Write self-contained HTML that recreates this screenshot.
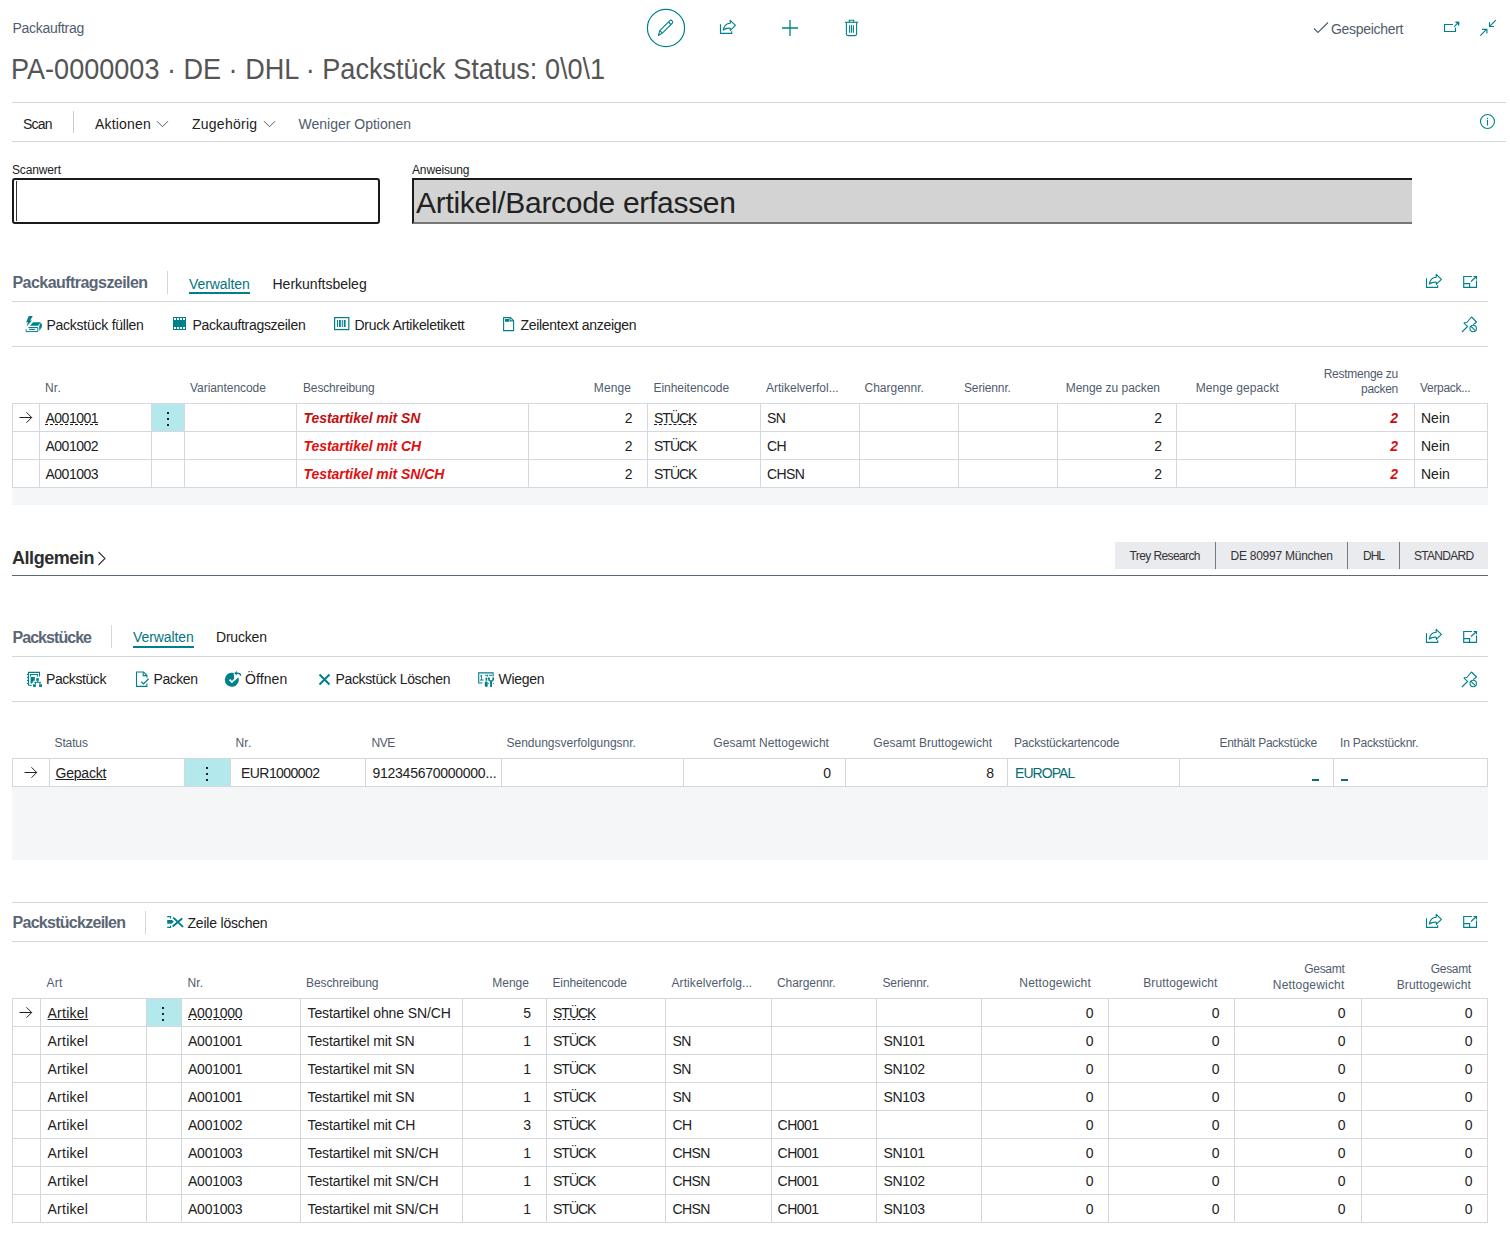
<!DOCTYPE html>
<html><head><meta charset="utf-8"><title>Packauftrag</title>
<style>
html,body{margin:0;padding:0;background:#fff;}
body{width:1510px;height:1248px;position:relative;overflow:hidden;font-family:"Liberation Sans", sans-serif;}
.t{position:absolute;white-space:nowrap;}
.r{position:absolute;display:block;}
</style></head><body>
<div class="t" style="top:19.45px;font-size:14px;line-height:18px;color:#505c6d;letter-spacing:-0.3px;left:12.5px;">Packauftrag</div>
<div class="t" style="top:50.20px;font-size:30px;line-height:38px;color:#555555;letter-spacing:0px;left:10.5px;transform:scaleX(0.902);transform-origin:0 0;">PA-0000003 · DE · DHL · Packstück Status: 0\0\1</div>
<svg class="r" style="left:646px;top:8px;" width="40" height="40" viewBox="0 0 40 40"><circle cx="20" cy="20" r="18.6" fill="none" stroke="#00808a" stroke-width="1.2"/><g fill="none" stroke="#00808a" stroke-width="1.1" stroke-linejoin="round"><path d="M12.5 27.5 L13.8 22.6 L23.6 12.8 A1.7 1.7 0 0 1 26.1 15.3 L16.3 25.1 Z"/><path d="M13.8 22.6 L16.3 25.1 M22.4 14 L24.9 16.5"/></g></svg>
<svg class="r" style="left:718px;top:18px;" width="20" height="18" viewBox="0 0 20 18"><g fill="none" stroke="#00808a" stroke-width="1.15"><path d="M2.5 6.2 V15.4 H13.7 V13.2"/><path d="M5.3 12 C5.9 8 8.6 5.4 12.2 5.2 V2.3 L17.4 7.4 L12.3 12.3 V10.2 C9.6 10 7.2 10.5 5.3 12 Z" stroke-linejoin="round"/></g></svg>
<svg class="r" style="left:781px;top:19px;" width="18" height="18" viewBox="0 0 18 18"><path d="M9 1 V17 M1 9 H17" stroke="#00808a" stroke-width="1.3"/></svg>
<svg class="r" style="left:844px;top:19px;" width="16" height="18" viewBox="0 0 16 18"><g fill="none" stroke="#00808a" stroke-width="1.1"><path d="M0.8 3.3 H14.2"/><path d="M5.3 3.2 V1.3 H9.7 V3.2"/><path d="M2.4 3.6 V15 Q2.4 16.6 4 16.6 H11 Q12.6 16.6 12.6 15 V3.6"/><path d="M5.6 6.2 V13.8 M7.5 6.2 V13.8 M9.4 6.2 V13.8"/></g></svg>
<svg class="r" style="left:1313px;top:21px;" width="16" height="13" viewBox="0 0 16 13"><path d="M1 7.5 L5 11.5 L15 1.5" fill="none" stroke="#505c6d" stroke-width="1.1"/></svg>
<div class="t" style="top:19.65px;font-size:14px;line-height:18px;color:#505c6d;letter-spacing:-0.3px;left:1331px;">Gespeichert</div>
<svg class="r" style="left:1440px;top:18px;" width="22" height="18" viewBox="0 0 22 18"><g fill="none" stroke="#00808a" stroke-width="1.15"><path d="M13 6.5 H4.5 V13.5 H15.5 V9.6"/><path d="M14.2 8.6 L18 4.8"/></g><path d="M15.2 3.8 H19.2 V7.8 Z" fill="#00808a"/><path d="M15.6 4.4 H18.6 V7.4" fill="none" stroke="#00808a" stroke-width="1.15"/></svg>
<svg class="r" style="left:1476px;top:17px;" width="22" height="22" viewBox="0 0 22 22"><g fill="none" stroke="#00808a" stroke-width="1.15"><path d="M19.8 3.2 L13.9 9.1"/><path d="M13.5 5.3 V9.5 H18"/><path d="M4.3 18.6 L10.3 12.6"/><path d="M6.1 12.3 H10.9 V16.6"/></g></svg>
<div class="r" style="left:12px;top:102px;width:1494px;height:1px;background:#d3d6da;"></div>
<div class="t" style="top:114.85px;font-size:14px;line-height:18px;color:#212121;letter-spacing:-0.8px;left:23px;">Scan</div>
<div class="r" style="left:73px;top:111px;width:1px;height:22px;background:#c8ccd1;"></div>
<div class="t" style="top:114.85px;font-size:14px;line-height:18px;color:#212121;letter-spacing:0.17px;left:95px;">Aktionen</div>
<svg class="r" style="left:156px;top:120px;" width="13" height="8" viewBox="0 0 13 8"><path d="M1 1.2 L6.5 6.7 L12 1.2" fill="none" stroke="#505c6d" stroke-width="1"/></svg>
<div class="t" style="top:114.85px;font-size:14px;line-height:18px;color:#212121;letter-spacing:0.25px;left:192px;">Zugehörig</div>
<svg class="r" style="left:262.5px;top:120px;" width="13" height="8" viewBox="0 0 13 8"><path d="M1 1.2 L6.5 6.7 L12 1.2" fill="none" stroke="#505c6d" stroke-width="1"/></svg>
<div class="t" style="top:114.85px;font-size:14px;line-height:18px;color:#505c6d;letter-spacing:0px;left:298.5px;">Weniger Optionen</div>
<svg class="r" style="left:1479px;top:113px;" width="17" height="17" viewBox="0 0 17 17"><circle cx="8.5" cy="8.5" r="7" fill="none" stroke="#00808a" stroke-width="1.1"/><path d="M8.5 7.4 V12" stroke="#00808a" stroke-width="1.1" stroke-linecap="round"/><circle cx="8.5" cy="5.4" r="0.75" fill="#00808a"/></svg>
<div class="r" style="left:12px;top:141px;width:1494px;height:1px;background:#d3d6da;"></div>
<div class="t" style="top:162.64px;font-size:12px;line-height:15px;color:#212121;letter-spacing:-0.15px;left:12px;">Scanwert</div>
<div class="r" style="left:12px;top:178px;width:368px;height:46px;background:#fff;box-sizing:border-box;border:2px solid #1a1a1a;border-radius:3px;"></div>
<div class="r" style="left:16px;top:181px;width:1px;height:40px;background:#333;"></div>
<div class="t" style="top:162.64px;font-size:12px;line-height:15px;color:#212121;letter-spacing:-0.15px;left:412px;">Anweisung</div>
<div class="r" style="left:412px;top:178px;width:1000px;height:46px;background:#d3d3d3;box-sizing:border-box;border-top:2px solid #1a1a1a;border-left:2px solid #1a1a1a;border-bottom:2px solid #777;"></div>
<div class="t" style="top:183.91px;font-size:30px;line-height:38px;color:#222;letter-spacing:-0.3px;left:416px;">Artikel/Barcode erfassen</div>
<div class="t" style="top:273.16px;font-size:16px;line-height:20px;color:#5a6676;font-weight:700;letter-spacing:-0.55px;left:12.5px;">Packauftragszeilen</div>
<div class="r" style="left:167px;top:271px;width:1px;height:23px;background:#d3d6da;"></div>
<div class="t" style="top:274.65px;font-size:14px;line-height:18px;color:#05747e;letter-spacing:-0.1px;left:189px;">Verwalten</div>
<div class="r" style="left:189px;top:291.5px;width:61px;height:2px;background:#00808a;"></div>
<div class="t" style="top:274.65px;font-size:14px;line-height:18px;color:#212121;letter-spacing:0px;left:272.5px;">Herkunftsbeleg</div>
<svg class="r" style="left:1424px;top:272px;" width="20" height="18" viewBox="0 0 20 18"><g fill="none" stroke="#00808a" stroke-width="1.15"><path d="M2.5 6.2 V15.4 H13.7 V13.2"/><path d="M5.3 12 C5.9 8 8.6 5.4 12.2 5.2 V2.3 L17.4 7.4 L12.3 12.3 V10.2 C9.6 10 7.2 10.5 5.3 12 Z" stroke-linejoin="round"/></g></svg>
<svg class="r" style="left:1461px;top:274px;" width="18" height="16" viewBox="0 0 18 16"><g fill="none" stroke="#00808a" stroke-width="1.15"><path d="M10.9 2.5 H2.7 V13.3 H15.5 V6.6"/><path d="M12.5 2.5 H15.5 V5.5"/><path d="M10 7.5 L15.2 2.8"/><path d="M2.7 9.6 H8.6 V13.3"/></g></svg>
<div class="r" style="left:12px;top:301px;width:1476px;height:1px;background:#d3d6da;"></div>
<svg class="r" style="left:24px;top:314px;" width="20" height="20" viewBox="0 0 20 20"><g fill="#00808a"><path d="M4.8 2.1 H8.8 L6.1 6.4 H7.9 L2.4 12.8 L4 8.3 H2.1 Z"/><path d="M9 8.2 H16.8 L14.1 11.7 H6.1 Z"/><path d="M16.5 8.7 L17.9 9.9 V12.8 L15.4 17.1 L15.1 12.8 Z"/></g><g fill="none" stroke="#00808a" stroke-width="1"><path d="M4.5 13.5 H13.8 V17.6 H2.1 V15.2"/><path d="M5.1 15.4 H10.9" stroke-width="1.2"/></g></svg>
<div class="t" style="top:315.95px;font-size:14px;line-height:18px;color:#212121;letter-spacing:-0.25px;left:46.5px;">Packstück füllen</div>
<svg class="r" style="left:173px;top:317px;" width="14" height="14" viewBox="0 0 14 14"><path fill="#00808a" d="M0 0 H13 V13 H0 Z M1 1 V3 H3 V1 Z M4 1 V3 H6 V1 Z M7 1 V3 H9 V1 Z M10 1 V3 H12 V1 Z M1 10 V12 H3 V10 Z M4 10 V12 H6 V10 Z M7 10 V12 H9 V10 Z M10 10 V12 H12 V10 Z" fill-rule="evenodd"/></svg>
<div class="t" style="top:315.95px;font-size:14px;line-height:18px;color:#212121;letter-spacing:-0.3px;left:192.5px;">Packauftragszeilen</div>
<svg class="r" style="left:334px;top:317px;" width="16" height="14" viewBox="0 0 16 14"><rect x="0.6" y="0.6" width="14.2" height="12" fill="none" stroke="#00808a" stroke-width="1.2"/><g fill="#00808a"><rect x="3" y="3" width="1" height="7"/><rect x="5" y="3" width="1.8" height="7"/><rect x="7.8" y="3" width="1" height="7"/><rect x="9.8" y="3" width="1.8" height="7"/></g></svg>
<div class="t" style="top:315.95px;font-size:14px;line-height:18px;color:#212121;letter-spacing:-0.3px;left:354.5px;">Druck Artikeletikett</div>
<svg class="r" style="left:503px;top:317px;" width="12" height="15" viewBox="0 0 12 15"><g fill="none" stroke="#00808a" stroke-width="1.1"><path d="M0.6 0.6 H7.5 L10.6 3.7 V13.6 H0.6 Z"/><path d="M7 0.8 V3.9 H10.4"/></g><rect x="2" y="2" width="4" height="2.8" fill="#00808a"/></svg>
<div class="t" style="top:315.95px;font-size:14px;line-height:18px;color:#212121;letter-spacing:-0.3px;left:520.5px;">Zeilentext anzeigen</div>
<svg class="r" style="left:1461px;top:316px;" width="17" height="17" viewBox="0 0 17 17"><g fill="none" stroke="#00808a" stroke-width="1.1" stroke-linejoin="round"><path d="M1 16 L6 11"/><path d="M2.8 6.8 L5.8 6.5 L10.5 1 L15.5 6 L12.2 8.6"/><path d="M2.8 6.8 L7.2 11.2"/><circle cx="12.2" cy="12.5" r="3.2"/><path d="M10 10.3 L14.4 14.7"/></g></svg>
<div class="r" style="left:12px;top:346px;width:1476px;height:1px;background:#d3d6da;"></div>
<div class="r" style="left:12px;top:488px;width:1476px;height:17px;background:#f5f6f8;"></div>
<div class="r" style="left:12px;top:403px;width:1476px;height:1px;background:#d5d7db;"></div>
<div class="r" style="left:12px;top:431px;width:1476px;height:1px;background:#d5d7db;"></div>
<div class="r" style="left:12px;top:459px;width:1476px;height:1px;background:#d5d7db;"></div>
<div class="r" style="left:12px;top:487px;width:1476px;height:1px;background:#d5d7db;"></div>
<div class="r" style="left:152px;top:404px;width:32px;height:27px;background:#b3e8ec;"></div>
<div class="r" style="left:12px;top:403px;width:1px;height:85px;background:#d5d7db;"></div>
<div class="r" style="left:39px;top:403px;width:1px;height:85px;background:#d5d7db;"></div>
<div class="r" style="left:151px;top:403px;width:1px;height:85px;background:#d5d7db;"></div>
<div class="r" style="left:184px;top:403px;width:1px;height:85px;background:#d5d7db;"></div>
<div class="r" style="left:296px;top:403px;width:1px;height:85px;background:#d5d7db;"></div>
<div class="r" style="left:528px;top:403px;width:1px;height:85px;background:#d5d7db;"></div>
<div class="r" style="left:647px;top:403px;width:1px;height:85px;background:#d5d7db;"></div>
<div class="r" style="left:760px;top:403px;width:1px;height:85px;background:#d5d7db;"></div>
<div class="r" style="left:859px;top:403px;width:1px;height:85px;background:#d5d7db;"></div>
<div class="r" style="left:958px;top:403px;width:1px;height:85px;background:#d5d7db;"></div>
<div class="r" style="left:1057px;top:403px;width:1px;height:85px;background:#d5d7db;"></div>
<div class="r" style="left:1176px;top:403px;width:1px;height:85px;background:#d5d7db;"></div>
<div class="r" style="left:1295px;top:403px;width:1px;height:85px;background:#d5d7db;"></div>
<div class="r" style="left:1414px;top:403px;width:1px;height:85px;background:#d5d7db;"></div>
<div class="r" style="left:1487px;top:403px;width:1px;height:85px;background:#d5d7db;"></div>
<div class="t" style="top:380.84px;font-size:12px;line-height:15px;color:#505c6d;letter-spacing:0.2px;left:45px;">Nr.</div>
<div class="t" style="top:380.84px;font-size:12px;line-height:15px;color:#505c6d;letter-spacing:-0.05px;left:190px;">Variantencode</div>
<div class="t" style="top:380.84px;font-size:12px;line-height:15px;color:#505c6d;letter-spacing:-0.15px;left:303px;">Beschreibung</div>
<div class="t" style="top:380.84px;font-size:12px;line-height:15px;color:#505c6d;letter-spacing:0.1px;right:879px;text-align:right;">Menge</div>
<div class="t" style="top:380.84px;font-size:12px;line-height:15px;color:#505c6d;letter-spacing:-0.04px;left:653.5px;">Einheitencode</div>
<div class="t" style="top:380.84px;font-size:12px;line-height:15px;color:#505c6d;letter-spacing:0.0px;left:766px;">Artikelverfol...</div>
<div class="t" style="top:380.84px;font-size:12px;line-height:15px;color:#505c6d;letter-spacing:0.0px;left:864.5px;">Chargennr.</div>
<div class="t" style="top:380.84px;font-size:12px;line-height:15px;color:#505c6d;letter-spacing:-0.14px;left:964px;">Seriennr.</div>
<div class="t" style="top:380.84px;font-size:12px;line-height:15px;color:#505c6d;letter-spacing:-0.03px;right:350px;text-align:right;">Menge zu packen</div>
<div class="t" style="top:380.84px;font-size:12px;line-height:15px;color:#505c6d;letter-spacing:0.1px;right:231px;text-align:right;">Menge gepackt</div>
<div class="t" style="top:366.84px;font-size:12px;line-height:15px;color:#505c6d;letter-spacing:-0.25px;right:112px;text-align:right;">Restmenge zu</div>
<div class="t" style="top:381.84px;font-size:12px;line-height:15px;color:#505c6d;letter-spacing:-0.3px;right:112px;text-align:right;">packen</div>
<div class="t" style="top:380.84px;font-size:12px;line-height:15px;color:#505c6d;letter-spacing:-0.3px;left:1420px;">Verpack...</div>
<svg class="r" style="left:19px;top:411px;" width="14" height="13" viewBox="0 0 14 13"><g fill="none" stroke="#222" stroke-width="1"><path d="M0.5 6.5 H12.8"/><path d="M7.5 1.3 L12.7 6.5 L7.5 11.7"/></g></svg>
<div class="t" style="top:408.95px;font-size:14px;line-height:18px;color:#212121;letter-spacing:-0.5px;left:45.5px;text-decoration:underline dashed 1px;text-underline-offset:1px;">A001001</div>
<div class="r" style="left:167px;top:412px;width:2px;height:2px;background:#222;"></div>
<div class="r" style="left:167px;top:418px;width:2px;height:2px;background:#222;"></div>
<div class="r" style="left:167px;top:424px;width:2px;height:2px;background:#222;"></div>
<div class="t" style="top:408.95px;font-size:14px;line-height:18px;color:#c40f0f;font-weight:700;font-style:italic;letter-spacing:-0.05px;left:303.5px;">Testartikel mit SN</div>
<div class="t" style="top:408.95px;font-size:14px;line-height:18px;color:#212121;right:877.5px;text-align:right;">2</div>
<div class="t" style="top:408.95px;font-size:14px;line-height:18px;color:#212121;letter-spacing:-1.0px;left:654px;text-decoration:underline dashed 1px;text-underline-offset:1px;">STÜCK</div>
<div class="t" style="top:408.95px;font-size:14px;line-height:18px;color:#212121;letter-spacing:-0.6px;left:767px;">SN</div>
<div class="t" style="top:408.95px;font-size:14px;line-height:18px;color:#212121;right:348px;text-align:right;">2</div>
<div class="t" style="top:408.95px;font-size:14px;line-height:18px;color:#c40f0f;font-weight:700;font-style:italic;right:112px;text-align:right;">2</div>
<div class="t" style="top:408.95px;font-size:14px;line-height:18px;color:#212121;letter-spacing:0px;left:1421px;">Nein</div>
<div class="t" style="top:436.95px;font-size:14px;line-height:18px;color:#212121;letter-spacing:-0.5px;left:45.5px;">A001002</div>
<div class="t" style="top:436.95px;font-size:14px;line-height:18px;color:#e01010;font-weight:700;font-style:italic;letter-spacing:-0.05px;left:303.5px;">Testartikel mit CH</div>
<div class="t" style="top:436.95px;font-size:14px;line-height:18px;color:#212121;right:877.5px;text-align:right;">2</div>
<div class="t" style="top:436.95px;font-size:14px;line-height:18px;color:#212121;letter-spacing:-1.0px;left:654px;">STÜCK</div>
<div class="t" style="top:436.95px;font-size:14px;line-height:18px;color:#212121;letter-spacing:-0.6px;left:767px;">CH</div>
<div class="t" style="top:436.95px;font-size:14px;line-height:18px;color:#212121;right:348px;text-align:right;">2</div>
<div class="t" style="top:436.95px;font-size:14px;line-height:18px;color:#e01010;font-weight:700;font-style:italic;right:112px;text-align:right;">2</div>
<div class="t" style="top:436.95px;font-size:14px;line-height:18px;color:#212121;letter-spacing:0px;left:1421px;">Nein</div>
<div class="t" style="top:464.95px;font-size:14px;line-height:18px;color:#212121;letter-spacing:-0.5px;left:45.5px;">A001003</div>
<div class="t" style="top:464.95px;font-size:14px;line-height:18px;color:#e01010;font-weight:700;font-style:italic;letter-spacing:-0.05px;left:303.5px;">Testartikel mit SN/CH</div>
<div class="t" style="top:464.95px;font-size:14px;line-height:18px;color:#212121;right:877.5px;text-align:right;">2</div>
<div class="t" style="top:464.95px;font-size:14px;line-height:18px;color:#212121;letter-spacing:-1.0px;left:654px;">STÜCK</div>
<div class="t" style="top:464.95px;font-size:14px;line-height:18px;color:#212121;letter-spacing:-0.6px;left:767px;">CHSN</div>
<div class="t" style="top:464.95px;font-size:14px;line-height:18px;color:#212121;right:348px;text-align:right;">2</div>
<div class="t" style="top:464.95px;font-size:14px;line-height:18px;color:#e01010;font-weight:700;font-style:italic;right:112px;text-align:right;">2</div>
<div class="t" style="top:464.95px;font-size:14px;line-height:18px;color:#212121;letter-spacing:0px;left:1421px;">Nein</div>
<div class="t" style="top:547.26px;font-size:18px;line-height:22px;color:#2e2e2e;font-weight:700;letter-spacing:-0.45px;left:12px;">Allgemein</div>
<svg class="r" style="left:97px;top:551px;" width="10" height="15" viewBox="0 0 10 15"><path d="M1.5 1 L8 7.5 L1.5 14" fill="none" stroke="#333" stroke-width="1.1"/></svg>
<div class="r" style="left:1115px;top:542px;width:373px;height:27px;background:#eaebee;"></div>
<div class="r" style="left:1215px;top:542px;width:1px;height:27px;background:#7a7a7a;"></div>
<div class="r" style="left:1347px;top:542px;width:1px;height:27px;background:#7a7a7a;"></div>
<div class="r" style="left:1399px;top:542px;width:1px;height:27px;background:#7a7a7a;"></div>
<div class="t" style="top:549.14px;font-size:12px;line-height:15px;color:#333;letter-spacing:-0.6px;left:1129.5px;">Trey Research</div>
<div class="t" style="top:549.14px;font-size:12px;line-height:15px;color:#333;letter-spacing:-0.25px;left:1230.5px;">DE 80997 München</div>
<div class="t" style="top:549.14px;font-size:12px;line-height:15px;color:#333;letter-spacing:-1.0px;left:1363px;">DHL</div>
<div class="t" style="top:549.14px;font-size:12px;line-height:15px;color:#333;letter-spacing:-0.7px;left:1414px;">STANDARD</div>
<div class="r" style="left:12px;top:575px;width:1476px;height:1px;background:#5c6779;"></div>
<div class="t" style="top:628.16px;font-size:16px;line-height:20px;color:#5a6676;font-weight:700;letter-spacing:-0.95px;left:12.5px;">Packstücke</div>
<div class="r" style="left:111px;top:625px;width:1px;height:23px;background:#d3d6da;"></div>
<div class="t" style="top:628.25px;font-size:14px;line-height:18px;color:#05747e;letter-spacing:-0.1px;left:133px;">Verwalten</div>
<div class="r" style="left:133px;top:646px;width:61px;height:2px;background:#00808a;"></div>
<div class="t" style="top:628.25px;font-size:14px;line-height:18px;color:#212121;letter-spacing:-0.2px;left:216px;">Drucken</div>
<svg class="r" style="left:1424px;top:627px;" width="20" height="18" viewBox="0 0 20 18"><g fill="none" stroke="#00808a" stroke-width="1.15"><path d="M2.5 6.2 V15.4 H13.7 V13.2"/><path d="M5.3 12 C5.9 8 8.6 5.4 12.2 5.2 V2.3 L17.4 7.4 L12.3 12.3 V10.2 C9.6 10 7.2 10.5 5.3 12 Z" stroke-linejoin="round"/></g></svg>
<svg class="r" style="left:1461px;top:629px;" width="18" height="16" viewBox="0 0 18 16"><g fill="none" stroke="#00808a" stroke-width="1.15"><path d="M10.9 2.5 H2.7 V13.3 H15.5 V6.6"/><path d="M12.5 2.5 H15.5 V5.5"/><path d="M10 7.5 L15.2 2.8"/><path d="M2.7 9.6 H8.6 V13.3"/></g></svg>
<div class="r" style="left:12px;top:656px;width:1476px;height:1px;background:#d3d6da;"></div>
<svg class="r" style="left:26px;top:670px;" width="18" height="18" viewBox="0 0 18 18"><g fill="none" stroke="#00808a" stroke-width="1.1"><path d="M2.5 15.3 V2.4 H13.5 V6.6"/><path d="M2.5 15.3 H5.7"/><path d="M4.5 6.6 V4.5 H11.5 V6.6"/></g><g fill="#00808a"><rect x="0.9" y="3.9" width="1.2" height="1.2"/><rect x="0.9" y="6.9" width="1.2" height="1.2"/><rect x="0.9" y="9.9" width="1.2" height="1.2"/><rect x="0.9" y="12.9" width="1.2" height="1.2"/><path d="M4.6 7.1 H8.8 V10.8 H7.3 V12.5 H6 V13.5 H4.6 Z"/><rect x="10.2" y="8.2" width="2.7" height="2.6"/><rect x="11.1" y="10.6" width="1" height="1.6"/><rect x="8.3" y="11.8" width="6.6" height="1"/><rect x="8.9" y="12.3" width="1" height="2"/><rect x="13.4" y="12.3" width="1" height="2"/><rect x="7" y="14.3" width="2.9" height="2.6"/><rect x="13.1" y="14.3" width="2.9" height="2.6"/></g></svg>
<div class="t" style="top:669.65px;font-size:14px;line-height:18px;color:#212121;letter-spacing:-0.42px;left:46px;">Packstück</div>
<svg class="r" style="left:134.5px;top:670px;" width="15" height="17" viewBox="0 0 15 17"><g fill="none" stroke="#00808a" stroke-width="1.1"><path d="M11.9 7.7 V5.3 L8.6 2 H1.5 V16.4 H11.9 V13.6"/><path d="M8.2 2.2 V5.6 H11.7"/><path d="M6.3 11.7 L8.5 13.9 L13.6 8.8" stroke-width="1.3"/></g></svg>
<div class="t" style="top:669.65px;font-size:14px;line-height:18px;color:#212121;letter-spacing:-0.45px;left:153.5px;">Packen</div>
<svg class="r" style="left:224px;top:669px;" width="18" height="19" viewBox="0 0 18 19"><path fill="#00808a" d="M9.6 4 A7 7 0 1 0 14.3 8.2 L10.6 11.9 L10.2 8.6 Z"/><path d="M5.6 10.6 L7.9 13.1 L14 7" fill="none" stroke="#fff" stroke-width="1.7"/><path d="M16.6 6.7 C16.6 4.8 15 4 12.4 4.2" fill="none" stroke="#00808a" stroke-width="1.5"/><path fill="#00808a" d="M10.2 4.2 L12.8 1.9 V6.5 Z"/></svg>
<div class="t" style="top:669.65px;font-size:14px;line-height:18px;color:#212121;letter-spacing:0.1px;left:245px;">Öffnen</div>
<svg class="r" style="left:317.5px;top:672.5px;" width="13" height="13" viewBox="0 0 13 13"><path d="M1.5 1.5 L11.5 11.5 M11.5 1.5 L1.5 11.5" stroke="#00808a" stroke-width="2"/></svg>
<div class="t" style="top:669.65px;font-size:14px;line-height:18px;color:#212121;letter-spacing:-0.35px;left:335.5px;">Packstück Löschen</div>
<svg class="r" style="left:476px;top:670px;" width="20" height="19" viewBox="0 0 20 19"><path d="M6.5 13 H2.7 V2.9 H17.1 V6.6" fill="none" stroke="#00808a" stroke-width="1.1"/><g fill="#00808a"><path d="M4.1 5.6 L5.9 5 V9.6 H7.6 V10.6 H4 V9.6 H5 V6.3 L4.1 6.6 Z"/><rect x="9.1" y="4.8" width="2.6" height="1"/><rect x="13" y="4.8" width="3" height="1"/><rect x="11" y="4.8" width="0.9" height="1.8"/><path d="M10.4 7.2 L11.2 8.2 V10.8 H9.6 V8.2 Z"/><rect x="8.8" y="11.4" width="2.9" height="5.5" rx="1.3"/><path d="M12 7.4 C11.7 9.8 12.5 11.2 14.1 11.6 V16.9 H16 V11.6 C17.6 11.2 18.4 9.8 18.1 7.4 H16.3 V10.3 H13.8 V7.4 Z"/><rect x="12.1" y="13.1" width="0.9" height="0.9"/><rect x="17" y="13.1" width="0.9" height="0.9"/></g></svg>
<div class="t" style="top:669.65px;font-size:14px;line-height:18px;color:#212121;letter-spacing:-0.3px;left:498.5px;">Wiegen</div>
<svg class="r" style="left:1461px;top:671px;" width="17" height="17" viewBox="0 0 17 17"><g fill="none" stroke="#00808a" stroke-width="1.1" stroke-linejoin="round"><path d="M1 16 L6 11"/><path d="M2.8 6.8 L5.8 6.5 L10.5 1 L15.5 6 L12.2 8.6"/><path d="M2.8 6.8 L7.2 11.2"/><circle cx="12.2" cy="12.5" r="3.2"/><path d="M10 10.3 L14.4 14.7"/></g></svg>
<div class="r" style="left:12px;top:701px;width:1476px;height:1px;background:#d3d6da;"></div>
<div class="r" style="left:12px;top:787px;width:1476px;height:73px;background:#f5f6f8;"></div>
<div class="r" style="left:12px;top:758px;width:1476px;height:1px;background:#d5d7db;"></div>
<div class="r" style="left:12px;top:786px;width:1476px;height:1px;background:#d5d7db;"></div>
<div class="r" style="left:185px;top:759px;width:45px;height:27px;background:#b3e8ec;"></div>
<div class="r" style="left:12px;top:758px;width:1px;height:29px;background:#d5d7db;"></div>
<div class="r" style="left:49px;top:758px;width:1px;height:29px;background:#d5d7db;"></div>
<div class="r" style="left:184px;top:758px;width:1px;height:29px;background:#d5d7db;"></div>
<div class="r" style="left:230px;top:758px;width:1px;height:29px;background:#d5d7db;"></div>
<div class="r" style="left:365px;top:758px;width:1px;height:29px;background:#d5d7db;"></div>
<div class="r" style="left:501px;top:758px;width:1px;height:29px;background:#d5d7db;"></div>
<div class="r" style="left:683px;top:758px;width:1px;height:29px;background:#d5d7db;"></div>
<div class="r" style="left:845px;top:758px;width:1px;height:29px;background:#d5d7db;"></div>
<div class="r" style="left:1007px;top:758px;width:1px;height:29px;background:#d5d7db;"></div>
<div class="r" style="left:1179px;top:758px;width:1px;height:29px;background:#d5d7db;"></div>
<div class="r" style="left:1333px;top:758px;width:1px;height:29px;background:#d5d7db;"></div>
<div class="r" style="left:1487px;top:758px;width:1px;height:29px;background:#d5d7db;"></div>
<div class="t" style="top:736.14px;font-size:12px;line-height:15px;color:#505c6d;letter-spacing:-0.12px;left:54.5px;">Status</div>
<div class="t" style="top:736.14px;font-size:12px;line-height:15px;color:#505c6d;letter-spacing:0.2px;left:235.5px;">Nr.</div>
<div class="t" style="top:736.14px;font-size:12px;line-height:15px;color:#505c6d;letter-spacing:-0.5px;left:371.5px;">NVE</div>
<div class="t" style="top:736.14px;font-size:12px;line-height:15px;color:#505c6d;letter-spacing:0.0px;left:506.5px;">Sendungsverfolgungsnr.</div>
<div class="t" style="top:736.14px;font-size:12px;line-height:15px;color:#505c6d;letter-spacing:0.05px;right:681px;text-align:right;">Gesamt Nettogewicht</div>
<div class="t" style="top:736.14px;font-size:12px;line-height:15px;color:#505c6d;letter-spacing:0.03px;right:518px;text-align:right;">Gesamt Bruttogewicht</div>
<div class="t" style="top:736.14px;font-size:12px;line-height:15px;color:#505c6d;letter-spacing:-0.16px;left:1014px;">Packstückartencode</div>
<div class="t" style="top:736.14px;font-size:12px;line-height:15px;color:#505c6d;letter-spacing:-0.25px;right:193px;text-align:right;">Enthält Packstücke</div>
<div class="t" style="top:736.14px;font-size:12px;line-height:15px;color:#505c6d;letter-spacing:-0.2px;left:1340px;">In Packstücknr.</div>
<svg class="r" style="left:24px;top:766px;" width="14" height="13" viewBox="0 0 14 13"><g fill="none" stroke="#222" stroke-width="1"><path d="M0.5 6.5 H12.8"/><path d="M7.5 1.3 L12.7 6.5 L7.5 11.7"/></g></svg>
<div class="t" style="top:763.95px;font-size:14px;line-height:18px;color:#212121;letter-spacing:-0.2px;left:55.5px;text-decoration:underline 1px;text-underline-offset:1px;">Gepackt</div>
<div class="r" style="left:206px;top:767px;width:2px;height:2px;background:#222;"></div>
<div class="r" style="left:206px;top:773px;width:2px;height:2px;background:#222;"></div>
<div class="r" style="left:206px;top:779px;width:2px;height:2px;background:#222;"></div>
<div class="t" style="top:763.95px;font-size:14px;line-height:18px;color:#212121;letter-spacing:-0.56px;left:241px;">EUR1000002</div>
<div class="t" style="top:763.95px;font-size:14px;line-height:18px;color:#212121;letter-spacing:-0.26px;left:372.5px;">912345670000000...</div>
<div class="t" style="top:763.95px;font-size:14px;line-height:18px;color:#212121;right:679px;text-align:right;">0</div>
<div class="t" style="top:763.95px;font-size:14px;line-height:18px;color:#212121;right:516px;text-align:right;">8</div>
<div class="t" style="top:763.95px;font-size:14px;line-height:18px;color:#066b74;letter-spacing:-0.95px;left:1015px;">EUROPAL</div>
<div class="r" style="left:1312px;top:779px;width:7px;height:1.5px;background:#0a6e76;"></div>
<div class="r" style="left:1341px;top:779px;width:7px;height:1.5px;background:#0a6e76;"></div>
<div class="r" style="left:12px;top:902px;width:1476px;height:1px;background:#d3d6da;"></div>
<div class="t" style="top:913.16px;font-size:16px;line-height:20px;color:#5a6676;font-weight:700;letter-spacing:-0.72px;left:12.5px;">Packstückzeilen</div>
<div class="r" style="left:145px;top:911px;width:1px;height:23px;background:#d3d6da;"></div>
<svg class="r" style="left:165px;top:914px;" width="19" height="15" viewBox="0 0 19 15"><g fill="none" stroke="#00808a" stroke-width="1.1"><path d="M2.2 2.6 H5.6 V4.4"/><path d="M2.2 13.4 H5.6 V11.4"/></g><path fill="#00808a" d="M2.2 6.1 H6.9 L8.8 7.5 L6.9 9.7 H2.2 Z"/><path d="M8.8 4.1 L17.5 12.4 M16.5 4.9 L8.2 11.9" stroke="#00808a" stroke-width="2" stroke-linecap="round"/></svg>
<div class="t" style="top:914.45px;font-size:14px;line-height:18px;color:#212121;letter-spacing:-0.2px;left:187.5px;">Zeile löschen</div>
<svg class="r" style="left:1424px;top:912px;" width="20" height="18" viewBox="0 0 20 18"><g fill="none" stroke="#00808a" stroke-width="1.15"><path d="M2.5 6.2 V15.4 H13.7 V13.2"/><path d="M5.3 12 C5.9 8 8.6 5.4 12.2 5.2 V2.3 L17.4 7.4 L12.3 12.3 V10.2 C9.6 10 7.2 10.5 5.3 12 Z" stroke-linejoin="round"/></g></svg>
<svg class="r" style="left:1461px;top:914px;" width="18" height="16" viewBox="0 0 18 16"><g fill="none" stroke="#00808a" stroke-width="1.15"><path d="M10.9 2.5 H2.7 V13.3 H15.5 V6.6"/><path d="M12.5 2.5 H15.5 V5.5"/><path d="M10 7.5 L15.2 2.8"/><path d="M2.7 9.6 H8.6 V13.3"/></g></svg>
<div class="r" style="left:12px;top:941px;width:1476px;height:1px;background:#d3d6da;"></div>
<div class="r" style="left:12px;top:998px;width:1476px;height:1px;background:#d5d7db;"></div>
<div class="r" style="left:12px;top:1026px;width:1476px;height:1px;background:#d5d7db;"></div>
<div class="r" style="left:12px;top:1054px;width:1476px;height:1px;background:#d5d7db;"></div>
<div class="r" style="left:12px;top:1082px;width:1476px;height:1px;background:#d5d7db;"></div>
<div class="r" style="left:12px;top:1110px;width:1476px;height:1px;background:#d5d7db;"></div>
<div class="r" style="left:12px;top:1138px;width:1476px;height:1px;background:#d5d7db;"></div>
<div class="r" style="left:12px;top:1166px;width:1476px;height:1px;background:#d5d7db;"></div>
<div class="r" style="left:12px;top:1194px;width:1476px;height:1px;background:#d5d7db;"></div>
<div class="r" style="left:12px;top:1222px;width:1476px;height:1px;background:#d5d7db;"></div>
<div class="r" style="left:147px;top:999px;width:34px;height:27px;background:#b3e8ec;"></div>
<div class="r" style="left:12px;top:998px;width:1px;height:225px;background:#d5d7db;"></div>
<div class="r" style="left:40px;top:998px;width:1px;height:225px;background:#d5d7db;"></div>
<div class="r" style="left:146px;top:998px;width:1px;height:225px;background:#d5d7db;"></div>
<div class="r" style="left:181px;top:998px;width:1px;height:225px;background:#d5d7db;"></div>
<div class="r" style="left:300px;top:998px;width:1px;height:225px;background:#d5d7db;"></div>
<div class="r" style="left:462px;top:998px;width:1px;height:225px;background:#d5d7db;"></div>
<div class="r" style="left:546px;top:998px;width:1px;height:225px;background:#d5d7db;"></div>
<div class="r" style="left:665px;top:998px;width:1px;height:225px;background:#d5d7db;"></div>
<div class="r" style="left:771px;top:998px;width:1px;height:225px;background:#d5d7db;"></div>
<div class="r" style="left:876px;top:998px;width:1px;height:225px;background:#d5d7db;"></div>
<div class="r" style="left:981px;top:998px;width:1px;height:225px;background:#d5d7db;"></div>
<div class="r" style="left:1108px;top:998px;width:1px;height:225px;background:#d5d7db;"></div>
<div class="r" style="left:1234px;top:998px;width:1px;height:225px;background:#d5d7db;"></div>
<div class="r" style="left:1361px;top:998px;width:1px;height:225px;background:#d5d7db;"></div>
<div class="r" style="left:1487px;top:998px;width:1px;height:225px;background:#d5d7db;"></div>
<div class="t" style="top:975.64px;font-size:12px;line-height:15px;color:#505c6d;letter-spacing:0.2px;left:46.5px;">Art</div>
<div class="t" style="top:975.64px;font-size:12px;line-height:15px;color:#505c6d;letter-spacing:0.15px;left:187.5px;">Nr.</div>
<div class="t" style="top:975.64px;font-size:12px;line-height:15px;color:#505c6d;letter-spacing:-0.09px;left:306px;">Beschreibung</div>
<div class="t" style="top:975.64px;font-size:12px;line-height:15px;color:#505c6d;letter-spacing:0.02px;right:981px;text-align:right;">Menge</div>
<div class="t" style="top:975.64px;font-size:12px;line-height:15px;color:#505c6d;letter-spacing:-0.13px;left:552.5px;">Einheitencode</div>
<div class="t" style="top:975.64px;font-size:12px;line-height:15px;color:#505c6d;letter-spacing:0.08px;left:671.5px;">Artikelverfolg...</div>
<div class="t" style="top:975.64px;font-size:12px;line-height:15px;color:#505c6d;letter-spacing:-0.08px;left:777px;">Chargennr.</div>
<div class="t" style="top:975.64px;font-size:12px;line-height:15px;color:#505c6d;letter-spacing:-0.15px;left:882.5px;">Seriennr.</div>
<div class="t" style="top:975.64px;font-size:12px;line-height:15px;color:#505c6d;letter-spacing:0.19px;right:419px;text-align:right;">Nettogewicht</div>
<div class="t" style="top:975.64px;font-size:12px;line-height:15px;color:#505c6d;letter-spacing:0.12px;right:292.5px;text-align:right;">Bruttogewicht</div>
<div class="t" style="top:961.64px;font-size:12px;line-height:15px;color:#505c6d;letter-spacing:-0.29px;right:165.5px;text-align:right;">Gesamt</div>
<div class="t" style="top:977.64px;font-size:12px;line-height:15px;color:#505c6d;letter-spacing:0.19px;right:165.5px;text-align:right;">Nettogewicht</div>
<div class="t" style="top:961.64px;font-size:12px;line-height:15px;color:#505c6d;letter-spacing:-0.29px;right:39px;text-align:right;">Gesamt</div>
<div class="t" style="top:977.64px;font-size:12px;line-height:15px;color:#505c6d;letter-spacing:0.12px;right:39px;text-align:right;">Bruttogewicht</div>
<svg class="r" style="left:19px;top:1006px;" width="14" height="13" viewBox="0 0 14 13"><g fill="none" stroke="#222" stroke-width="1"><path d="M0.5 6.5 H12.8"/><path d="M7.5 1.3 L12.7 6.5 L7.5 11.7"/></g></svg>
<div class="t" style="top:1003.95px;font-size:14px;line-height:18px;color:#212121;letter-spacing:0.26px;left:47.5px;text-decoration:underline 1px;text-underline-offset:1px;">Artikel</div>
<div class="r" style="left:162px;top:1007px;width:2px;height:2px;background:#222;"></div>
<div class="r" style="left:162px;top:1013px;width:2px;height:2px;background:#222;"></div>
<div class="r" style="left:162px;top:1019px;width:2px;height:2px;background:#222;"></div>
<div class="t" style="top:1003.95px;font-size:14px;line-height:18px;color:#212121;letter-spacing:-0.24px;left:188px;text-decoration:underline dashed 1px;text-underline-offset:1px;">A001000</div>
<div class="t" style="top:1003.95px;font-size:14px;line-height:18px;color:#212121;letter-spacing:-0.1px;left:307.5px;">Testartikel ohne SN/CH</div>
<div class="t" style="top:1003.95px;font-size:14px;line-height:18px;color:#212121;right:979px;text-align:right;">5</div>
<div class="t" style="top:1003.95px;font-size:14px;line-height:18px;color:#212121;letter-spacing:-1.0px;left:553px;text-decoration:underline dashed 1px;text-underline-offset:1px;">STÜCK</div>
<div class="t" style="top:1003.95px;font-size:14px;line-height:18px;color:#212121;right:416.5px;text-align:right;">0</div>
<div class="t" style="top:1003.95px;font-size:14px;line-height:18px;color:#212121;right:290.5px;text-align:right;">0</div>
<div class="t" style="top:1003.95px;font-size:14px;line-height:18px;color:#212121;right:164.5px;text-align:right;">0</div>
<div class="t" style="top:1003.95px;font-size:14px;line-height:18px;color:#212121;right:37.5px;text-align:right;">0</div>
<div class="t" style="top:1031.95px;font-size:14px;line-height:18px;color:#212121;letter-spacing:0.26px;left:47.5px;">Artikel</div>
<div class="t" style="top:1031.95px;font-size:14px;line-height:18px;color:#212121;letter-spacing:-0.24px;left:188px;">A001001</div>
<div class="t" style="top:1031.95px;font-size:14px;line-height:18px;color:#212121;letter-spacing:-0.1px;left:307.5px;">Testartikel mit SN</div>
<div class="t" style="top:1031.95px;font-size:14px;line-height:18px;color:#212121;right:979px;text-align:right;">1</div>
<div class="t" style="top:1031.95px;font-size:14px;line-height:18px;color:#212121;letter-spacing:-1.0px;left:553px;">STÜCK</div>
<div class="t" style="top:1031.95px;font-size:14px;line-height:18px;color:#212121;letter-spacing:-0.6px;left:672.5px;">SN</div>
<div class="t" style="top:1031.95px;font-size:14px;line-height:18px;color:#212121;letter-spacing:-0.32px;left:883.5px;">SN101</div>
<div class="t" style="top:1031.95px;font-size:14px;line-height:18px;color:#212121;right:416.5px;text-align:right;">0</div>
<div class="t" style="top:1031.95px;font-size:14px;line-height:18px;color:#212121;right:290.5px;text-align:right;">0</div>
<div class="t" style="top:1031.95px;font-size:14px;line-height:18px;color:#212121;right:164.5px;text-align:right;">0</div>
<div class="t" style="top:1031.95px;font-size:14px;line-height:18px;color:#212121;right:37.5px;text-align:right;">0</div>
<div class="t" style="top:1059.95px;font-size:14px;line-height:18px;color:#212121;letter-spacing:0.26px;left:47.5px;">Artikel</div>
<div class="t" style="top:1059.95px;font-size:14px;line-height:18px;color:#212121;letter-spacing:-0.24px;left:188px;">A001001</div>
<div class="t" style="top:1059.95px;font-size:14px;line-height:18px;color:#212121;letter-spacing:-0.1px;left:307.5px;">Testartikel mit SN</div>
<div class="t" style="top:1059.95px;font-size:14px;line-height:18px;color:#212121;right:979px;text-align:right;">1</div>
<div class="t" style="top:1059.95px;font-size:14px;line-height:18px;color:#212121;letter-spacing:-1.0px;left:553px;">STÜCK</div>
<div class="t" style="top:1059.95px;font-size:14px;line-height:18px;color:#212121;letter-spacing:-0.6px;left:672.5px;">SN</div>
<div class="t" style="top:1059.95px;font-size:14px;line-height:18px;color:#212121;letter-spacing:-0.32px;left:883.5px;">SN102</div>
<div class="t" style="top:1059.95px;font-size:14px;line-height:18px;color:#212121;right:416.5px;text-align:right;">0</div>
<div class="t" style="top:1059.95px;font-size:14px;line-height:18px;color:#212121;right:290.5px;text-align:right;">0</div>
<div class="t" style="top:1059.95px;font-size:14px;line-height:18px;color:#212121;right:164.5px;text-align:right;">0</div>
<div class="t" style="top:1059.95px;font-size:14px;line-height:18px;color:#212121;right:37.5px;text-align:right;">0</div>
<div class="t" style="top:1087.95px;font-size:14px;line-height:18px;color:#212121;letter-spacing:0.26px;left:47.5px;">Artikel</div>
<div class="t" style="top:1087.95px;font-size:14px;line-height:18px;color:#212121;letter-spacing:-0.24px;left:188px;">A001001</div>
<div class="t" style="top:1087.95px;font-size:14px;line-height:18px;color:#212121;letter-spacing:-0.1px;left:307.5px;">Testartikel mit SN</div>
<div class="t" style="top:1087.95px;font-size:14px;line-height:18px;color:#212121;right:979px;text-align:right;">1</div>
<div class="t" style="top:1087.95px;font-size:14px;line-height:18px;color:#212121;letter-spacing:-1.0px;left:553px;">STÜCK</div>
<div class="t" style="top:1087.95px;font-size:14px;line-height:18px;color:#212121;letter-spacing:-0.6px;left:672.5px;">SN</div>
<div class="t" style="top:1087.95px;font-size:14px;line-height:18px;color:#212121;letter-spacing:-0.32px;left:883.5px;">SN103</div>
<div class="t" style="top:1087.95px;font-size:14px;line-height:18px;color:#212121;right:416.5px;text-align:right;">0</div>
<div class="t" style="top:1087.95px;font-size:14px;line-height:18px;color:#212121;right:290.5px;text-align:right;">0</div>
<div class="t" style="top:1087.95px;font-size:14px;line-height:18px;color:#212121;right:164.5px;text-align:right;">0</div>
<div class="t" style="top:1087.95px;font-size:14px;line-height:18px;color:#212121;right:37.5px;text-align:right;">0</div>
<div class="t" style="top:1115.95px;font-size:14px;line-height:18px;color:#212121;letter-spacing:0.26px;left:47.5px;">Artikel</div>
<div class="t" style="top:1115.95px;font-size:14px;line-height:18px;color:#212121;letter-spacing:-0.24px;left:188px;">A001002</div>
<div class="t" style="top:1115.95px;font-size:14px;line-height:18px;color:#212121;letter-spacing:-0.1px;left:307.5px;">Testartikel mit CH</div>
<div class="t" style="top:1115.95px;font-size:14px;line-height:18px;color:#212121;right:979px;text-align:right;">3</div>
<div class="t" style="top:1115.95px;font-size:14px;line-height:18px;color:#212121;letter-spacing:-1.0px;left:553px;">STÜCK</div>
<div class="t" style="top:1115.95px;font-size:14px;line-height:18px;color:#212121;letter-spacing:-0.6px;left:672.5px;">CH</div>
<div class="t" style="top:1115.95px;font-size:14px;line-height:18px;color:#212121;letter-spacing:-0.48px;left:777.5px;">CH001</div>
<div class="t" style="top:1115.95px;font-size:14px;line-height:18px;color:#212121;right:416.5px;text-align:right;">0</div>
<div class="t" style="top:1115.95px;font-size:14px;line-height:18px;color:#212121;right:290.5px;text-align:right;">0</div>
<div class="t" style="top:1115.95px;font-size:14px;line-height:18px;color:#212121;right:164.5px;text-align:right;">0</div>
<div class="t" style="top:1115.95px;font-size:14px;line-height:18px;color:#212121;right:37.5px;text-align:right;">0</div>
<div class="t" style="top:1143.95px;font-size:14px;line-height:18px;color:#212121;letter-spacing:0.26px;left:47.5px;">Artikel</div>
<div class="t" style="top:1143.95px;font-size:14px;line-height:18px;color:#212121;letter-spacing:-0.24px;left:188px;">A001003</div>
<div class="t" style="top:1143.95px;font-size:14px;line-height:18px;color:#212121;letter-spacing:-0.1px;left:307.5px;">Testartikel mit SN/CH</div>
<div class="t" style="top:1143.95px;font-size:14px;line-height:18px;color:#212121;right:979px;text-align:right;">1</div>
<div class="t" style="top:1143.95px;font-size:14px;line-height:18px;color:#212121;letter-spacing:-1.0px;left:553px;">STÜCK</div>
<div class="t" style="top:1143.95px;font-size:14px;line-height:18px;color:#212121;letter-spacing:-0.6px;left:672.5px;">CHSN</div>
<div class="t" style="top:1143.95px;font-size:14px;line-height:18px;color:#212121;letter-spacing:-0.48px;left:777.5px;">CH001</div>
<div class="t" style="top:1143.95px;font-size:14px;line-height:18px;color:#212121;letter-spacing:-0.32px;left:883.5px;">SN101</div>
<div class="t" style="top:1143.95px;font-size:14px;line-height:18px;color:#212121;right:416.5px;text-align:right;">0</div>
<div class="t" style="top:1143.95px;font-size:14px;line-height:18px;color:#212121;right:290.5px;text-align:right;">0</div>
<div class="t" style="top:1143.95px;font-size:14px;line-height:18px;color:#212121;right:164.5px;text-align:right;">0</div>
<div class="t" style="top:1143.95px;font-size:14px;line-height:18px;color:#212121;right:37.5px;text-align:right;">0</div>
<div class="t" style="top:1171.95px;font-size:14px;line-height:18px;color:#212121;letter-spacing:0.26px;left:47.5px;">Artikel</div>
<div class="t" style="top:1171.95px;font-size:14px;line-height:18px;color:#212121;letter-spacing:-0.24px;left:188px;">A001003</div>
<div class="t" style="top:1171.95px;font-size:14px;line-height:18px;color:#212121;letter-spacing:-0.1px;left:307.5px;">Testartikel mit SN/CH</div>
<div class="t" style="top:1171.95px;font-size:14px;line-height:18px;color:#212121;right:979px;text-align:right;">1</div>
<div class="t" style="top:1171.95px;font-size:14px;line-height:18px;color:#212121;letter-spacing:-1.0px;left:553px;">STÜCK</div>
<div class="t" style="top:1171.95px;font-size:14px;line-height:18px;color:#212121;letter-spacing:-0.6px;left:672.5px;">CHSN</div>
<div class="t" style="top:1171.95px;font-size:14px;line-height:18px;color:#212121;letter-spacing:-0.48px;left:777.5px;">CH001</div>
<div class="t" style="top:1171.95px;font-size:14px;line-height:18px;color:#212121;letter-spacing:-0.32px;left:883.5px;">SN102</div>
<div class="t" style="top:1171.95px;font-size:14px;line-height:18px;color:#212121;right:416.5px;text-align:right;">0</div>
<div class="t" style="top:1171.95px;font-size:14px;line-height:18px;color:#212121;right:290.5px;text-align:right;">0</div>
<div class="t" style="top:1171.95px;font-size:14px;line-height:18px;color:#212121;right:164.5px;text-align:right;">0</div>
<div class="t" style="top:1171.95px;font-size:14px;line-height:18px;color:#212121;right:37.5px;text-align:right;">0</div>
<div class="t" style="top:1199.95px;font-size:14px;line-height:18px;color:#212121;letter-spacing:0.26px;left:47.5px;">Artikel</div>
<div class="t" style="top:1199.95px;font-size:14px;line-height:18px;color:#212121;letter-spacing:-0.24px;left:188px;">A001003</div>
<div class="t" style="top:1199.95px;font-size:14px;line-height:18px;color:#212121;letter-spacing:-0.1px;left:307.5px;">Testartikel mit SN/CH</div>
<div class="t" style="top:1199.95px;font-size:14px;line-height:18px;color:#212121;right:979px;text-align:right;">1</div>
<div class="t" style="top:1199.95px;font-size:14px;line-height:18px;color:#212121;letter-spacing:-1.0px;left:553px;">STÜCK</div>
<div class="t" style="top:1199.95px;font-size:14px;line-height:18px;color:#212121;letter-spacing:-0.6px;left:672.5px;">CHSN</div>
<div class="t" style="top:1199.95px;font-size:14px;line-height:18px;color:#212121;letter-spacing:-0.48px;left:777.5px;">CH001</div>
<div class="t" style="top:1199.95px;font-size:14px;line-height:18px;color:#212121;letter-spacing:-0.32px;left:883.5px;">SN103</div>
<div class="t" style="top:1199.95px;font-size:14px;line-height:18px;color:#212121;right:416.5px;text-align:right;">0</div>
<div class="t" style="top:1199.95px;font-size:14px;line-height:18px;color:#212121;right:290.5px;text-align:right;">0</div>
<div class="t" style="top:1199.95px;font-size:14px;line-height:18px;color:#212121;right:164.5px;text-align:right;">0</div>
<div class="t" style="top:1199.95px;font-size:14px;line-height:18px;color:#212121;right:37.5px;text-align:right;">0</div>
</body></html>
